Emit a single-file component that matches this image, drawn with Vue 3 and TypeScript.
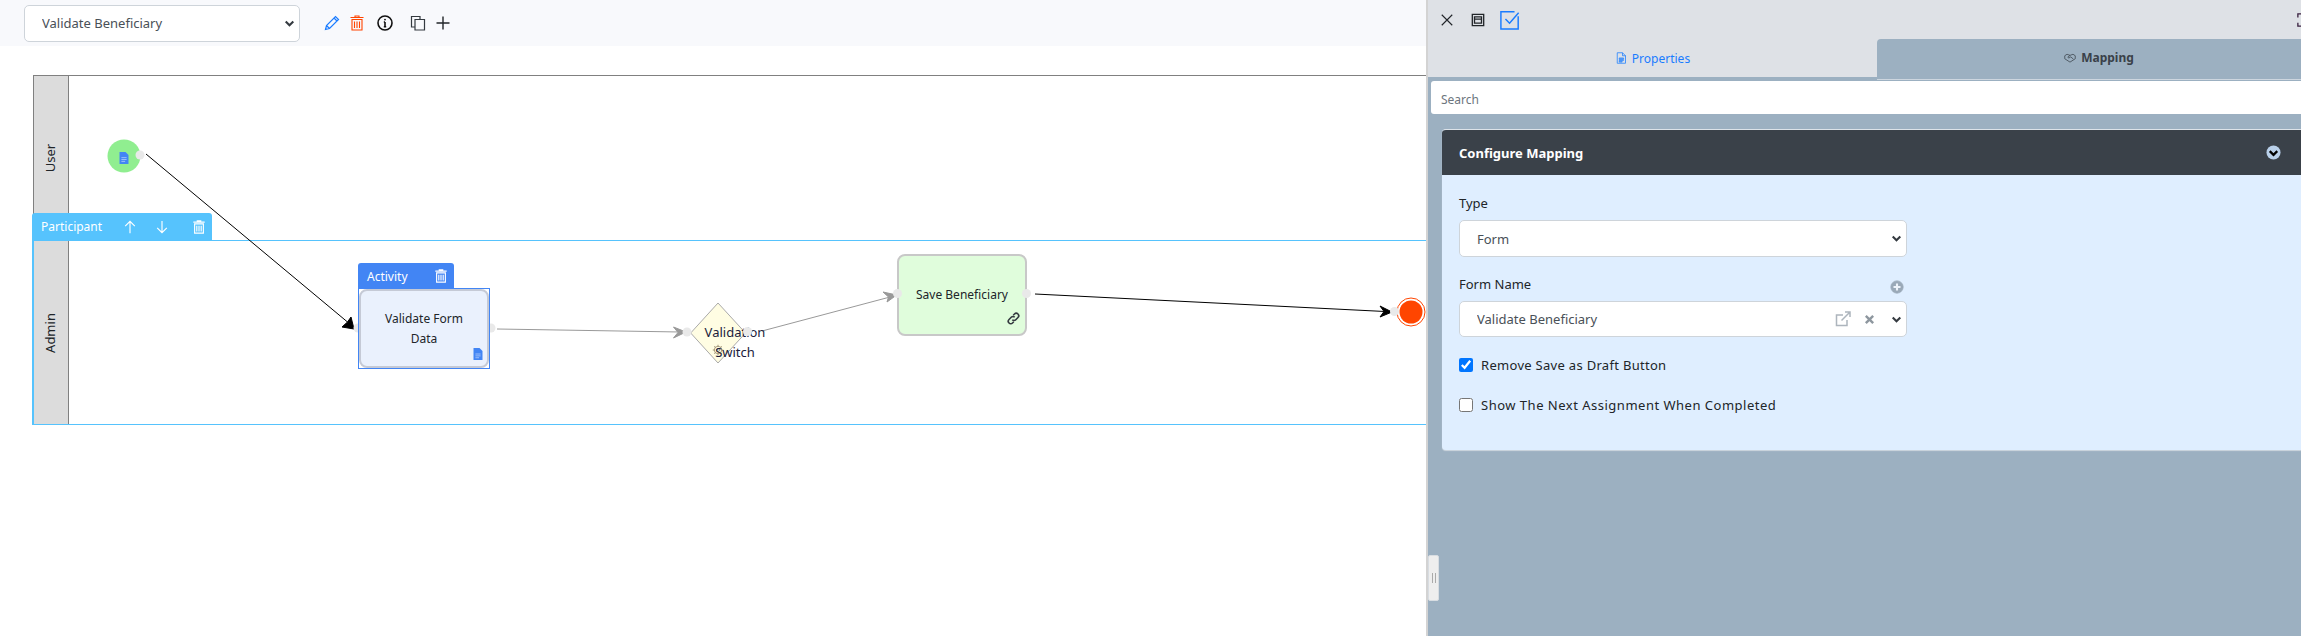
<script setup lang="ts">
import { ref } from "vue";

const processName = ref("Validate Beneficiary");
const mappingType = ref("Form");
const formName = ref("Validate Beneficiary");
const removeDraft = ref(true);
const showNext = ref(false);

const lanes = [
  { name: "User", cls: "lane-user" },
  { name: "Admin", cls: "lane-admin" },
];

// hand drawn, all on a 16 box
const doc = "M3 1h7l4 4v10H3zM10 1v4h4M5.5 8h6v1h-6zM5.5 10.2h6v1h-6zM5.5 12.4h4v1h-4z";
const trash = "M3 4.5h10V15H3zM1.5 2.5h13M6 2.5V1h4v1.5M5.5 6.5v6.5M8 6.5v6.5M10.5 6.5v6.5";
const chevron = "M2.5 5l5.5 5.5L13.5 5";
</script>

<template>
  <div class="page">
    <div class="toolbar">
      <div class="select-wrap top-select">
        <select v-model="processName">
          <option>Validate Beneficiary</option>
        </select>
        <svg class="chev" viewBox="0 0 16 16"><path :d="chevron" /></svg>
      </div>
      <div class="tools">
        <svg class="tool pencil" viewBox="0 0 16 16"><path d="M1.5 14.5l1-4L11.5 1.5l3 3L5.500 13.500zM2.500 10.500l3 3M10 3l3 3" /></svg>
        <svg class="tool bin" viewBox="0 0 16 16"><path :d="trash" /></svg>
        <svg class="tool info" viewBox="0 0 16 16"><circle cx="8" cy="8" r="7" /><path d="M8 7v4.500M6.800 11.800h2.400M6.800 7h1.200" /><circle class="dot" cx="8" cy="4.600" r="0.900" /></svg>
        <svg class="tool copy" viewBox="0 0 16 16"><path d="M5 12H1.500V1.500H10V4M5 4.500h9.500V15H5z" /></svg>
        <svg class="tool plus" viewBox="0 0 16 16"><path d="M8 1.500v13M1.500 8h13" /></svg>
      </div>
    </div>

    <div class="pool">
      <div v-for="lane in lanes" :key="lane.name" class="lane" :class="lane.cls">
        <div class="lane-head"><span>{{ lane.name }}</span></div>
      </div>
    </div>

    <!-- diagram canvas, page coordinates -->
    <div class="diagram">
      <svg class="edges" width="2301" height="636" viewBox="0 0 2301 636">
        <g class="edge dark">
          <path d="M146 154L347.500 322" />
          <path class="head" d="M354 329L342 327L347.500 322L351 317z" />
        </g>
        <g class="edge grey">
          <path d="M497 329L680 332" />
          <path class="head" d="M686 332L673.500 327L678 332.500L673.500 338z" />
          <path d="M762 331L890 297" />
          <path class="head" d="M896.700 295L883 292L888.500 297L887 302z" />
        </g>
        <g class="edge dark">
          <path d="M1035 294L1385 311.500" />
          <path class="head" d="M1392 312L1380 306L1384 311.500L1380 317z" />
        </g>
        <polygon class="gateway" points="718,303 745.500,333 718,363 690.700,333" />
        <circle class="end-ring" cx="1411" cy="312" r="14" />
        <circle class="end-fill" cx="1411" cy="312" r="11.500" />
        <circle class="start" cx="124" cy="156" r="16.500" />
        <circle class="port" cx="140" cy="155" r="4.500" />
        <circle class="port" cx="358" cy="328" r="4.500" />
        <circle class="port" cx="491" cy="328" r="4.500" />
        <circle class="port" cx="687" cy="332" r="4.500" />
      </svg>

      <svg class="start-doc" viewBox="0 0 16 16"><path class="doc-fill" d="M2 0h8l4 4v12H2z" /><path class="doc-lines" d="M4.500 7.500h7M4.500 10h7M4.500 12.500h5" /></svg>

      <div class="participant-tag">
        <span>Participant</span>
        <svg class="tag-icon up" viewBox="0 0 16 16"><path d="M8 15V1.500M2.500 7L8 1.500 13.500 7" /></svg>
        <svg class="tag-icon down" viewBox="0 0 16 16"><path d="M8 1v13.500M2.500 9L8 14.500 13.500 9" /></svg>
        <svg class="tag-icon del" viewBox="0 0 16 16"><path :d="trash" /></svg>
      </div>

      <div class="activity-tag">
        <span>Activity</span>
        <svg class="tag-icon" viewBox="0 0 16 16"><path :d="trash" /></svg>
      </div>
      <div class="activity-frame">
        <div class="node activity-node">Validate Form<br />Data</div>
        <svg class="node-doc" viewBox="0 0 16 16"><path class="doc-fill" d="M2 0h8l4 4v12H2z" /><path class="doc-lines" d="M4.500 8h7M4.500 10.500h7M4.500 13h5" /></svg>
      </div>

      <svg class="gear" viewBox="0 0 16 16"><circle cx="8" cy="8" r="5" /><circle cx="8" cy="8" r="2" /><path d="M8 1v2M8 13v2M1 8h2M13 8h2M3 3l1.500 1.500M11.500 11.500L13 13M13 3l-1.500 1.500M4.500 11.500L3 13" /></svg>
      <div class="gateway-label">Validation<br />Switch</div>
      <i class="gate-port"></i>

      <div class="node save-node">
        Save Beneficiary
        <svg class="link" viewBox="0 0 16 16"><path d="M6.500 9.500a3 3 0 0 0 4.300 0l2.700-2.700a3 3 0 0 0-4.300-4.300L7.700 4M9.500 6.500a3 3 0 0 0-4.300 0L2.500 9.200a3 3 0 0 0 4.300 4.300L8.300 12" /></svg>
        <i class="save-port in"></i>
        <i class="save-port out"></i>
      </div>
      <i class="end-port"></i>
    </div>

    <!-- side panel sits over the canvas -->
    <aside class="panel">
      <div class="panel-top">
        <svg class="p-icon close" viewBox="0 0 16 16"><path d="M2 2l12 12M14 2L2 14" /></svg>
        <svg class="p-icon window" viewBox="0 0 16 16"><path d="M1.500 1.500h13v13h-13zM4 4.500h8v7H4zM4 7h8" /></svg>
        <svg class="p-icon check" viewBox="0 0 22 22"><path d="M20 7v14H1V2h15M6 10l4.500 4.500L20.500 3" /></svg>
        <svg class="p-icon full" viewBox="0 0 16 16"><path d="M5 1H1v4M11 1h4v4M5 15H1v-4M11 15h4v-4" /></svg>
      </div>

      <div class="tabs">
        <div class="tab tab-props">
          <svg class="tab-icon" viewBox="0 0 16 16"><path :d="doc" /></svg>
          Properties
        </div>
        <div class="tab tab-map">
          <svg class="tab-icon" viewBox="0 0 16 12"><path d="M1 3l3-2 4 1.500L12 1l3 2v4l-7 4.500L1 7zM8 2.500L5 5l1.500 1L9 4.500l3.500 3" /></svg>
          Mapping
        </div>
      </div>

      <input class="search" type="text" placeholder="Search" />

      <section class="card">
        <header class="card-head">
          <span>Configure Mapping</span>
          <svg class="collapse" viewBox="0 0 16 16"><circle cx="8" cy="8" r="7.500" /><path d="M4 6.500l4 4 4-4" /></svg>
        </header>
        <div class="card-body">
          <div class="field">
            <label>Type</label>
            <div class="select-wrap">
              <select v-model="mappingType">
                <option>Form</option>
              </select>
              <svg class="chev" viewBox="0 0 16 16"><path :d="chevron" /></svg>
            </div>
          </div>

          <div class="field field-name">
            <label>Form Name</label>
            <svg class="add" viewBox="0 0 16 16"><circle cx="8" cy="8" r="7" /><path d="M8 4v8M4 8h8" /></svg>
            <div class="select-wrap">
              <select v-model="formName">
                <option>Validate Beneficiary</option>
              </select>
              <svg class="open-link" viewBox="0 0 16 16"><path d="M12 9v5.500H1.500V4H8M6.500 9.500L14.500 1.500M10 1h5v5" /></svg>
              <svg class="clear" viewBox="0 0 12 12"><path d="M2 2l8 8M10 2l-8 8" /></svg>
              <svg class="chev" viewBox="0 0 16 16"><path :d="chevron" /></svg>
            </div>
          </div>

          <label class="check-row first">
            <input v-model="removeDraft" type="checkbox" />
            <span>Remove Save as Draft Button</span>
          </label>
          <label class="check-row second">
            <input v-model="showNext" type="checkbox" />
            <span>Show The Next Assignment When Completed</span>
          </label>
        </div>
      </section>

      <div class="handle"><i></i><i></i></div>
    </aside>
  </div>
</template>

<style>
html,
body {
  margin: 0;
  background: #fff;
}
</style>

<style scoped>
.page {
  position: relative;
  width: 2301px;
  height: 636px;
  overflow: hidden;
  background: #fff;
  color: #212529;
  font-family: "Noto Sans", "Open Sans", sans-serif;
  font-size: 13px;
}

svg {
  display: block;
  fill: none;
  stroke: currentColor;
}

/* toolbar */
.toolbar {
  display: flex;
  align-items: center;
  height: 46px;
  padding-left: 24px;
  background: #f8f9fc;
}

.select-wrap {
  position: relative;
}

.select-wrap select {
  display: block;
  width: 100%;
  height: 37px;
  padding: 0 17px;
  border: 1px solid #ced4da;
  border-radius: 5px;
  background: #fff;
  color: #495057;
  font: inherit;
  appearance: none;
}

.top-select {
  width: 276px;
}

.chev {
  position: absolute;
  right: 5px;
  top: 13px;
  width: 11px;
  height: 11px;
  color: #343a40;
  stroke-width: 3;
}

.tools {
  display: flex;
  align-items: center;
  margin-left: 24px;
}

.tool {
  width: 16px;
  height: 16px;
  stroke-width: 1.2;
}

.pencil {
  color: #1a7cff;
}

.bin {
  margin-left: 9px;
  color: #ff4500;
  stroke-width: 1.1;
}

.info {
  margin-left: 12px;
  color: #111;
  stroke-width: 1.6;
}

.dot {
  fill: #111;
  stroke: none;
}

.copy {
  margin-left: 17px;
  color: #343a40;
}

.plus {
  margin-left: 9px;
  color: #212529;
  stroke-width: 1.4;
}

/* swimlanes */
.pool {
  margin: 29px 0 0 33px;
  width: 1400px;
}

.lane {
  display: flex;
  box-sizing: border-box;
}

.lane-user {
  height: 165px;
  border-top: 1px solid #808080;
  border-left: 1px solid #808080;
}

.lane-admin {
  height: 185px;
  margin-left: -1px;
  border-top: 1px solid #56c3fd;
  border-left: 2px solid #56c3fd;
  border-bottom: 1px solid #56c3fd;
}

.lane-head {
  display: flex;
  align-items: center;
  justify-content: center;
  width: 34px;
  background: #dcdcdc;
  border-right: 1px solid #808080;
  font-size: 13px;
}

.lane-head span {
  transform: rotate(-90deg);
  margin-right: 2px;
}

/* diagram */
.diagram {
  position: absolute;
  inset: 0;
}

.edges {
  position: absolute;
  left: 0;
  top: 0;
}

.edge path {
  stroke-width: 1;
}

.edge.dark {
  color: #000;
}

.edge.grey {
  color: #999;
}

.edge .head {
  fill: currentColor;
}

.gateway {
  fill: #fffde3;
  stroke: #aaa;
}

.start {
  fill: #90ee90;
  stroke: none;
}

.port {
  fill: #e9e9e9;
  stroke: none;
}

.end-ring {
  fill: #fff;
  stroke: #ff4500;
}

.end-fill {
  fill: #ff4500;
  stroke: none;
}

.doc-fill {
  fill: #4285f4;
  stroke: none;
}

.doc-lines {
  stroke: #b9d0fb;
  stroke-width: 1;
}

.start-doc {
  position: absolute;
  left: 118px;
  top: 151px;
  width: 12px;
  height: 14px;
}

.participant-tag,
.activity-tag {
  position: absolute;
  display: flex;
  align-items: center;
  box-sizing: border-box;
  color: #fff;
  font-size: 12px;
}

.participant-tag {
  left: 32px;
  top: 213px;
  width: 180px;
  height: 27px;
  padding-left: 9px;
  background: #56c3fd;
  border-radius: 3px 3px 0 0;
}

.tag-icon {
  width: 14px;
  height: 14px;
  stroke-width: 1.300;
}

.up {
  margin-left: 21px;
}

.down {
  margin-left: 18px;
}

.del {
  margin-left: 23px;
}

.activity-tag {
  left: 358px;
  top: 263px;
  width: 96px;
  height: 26px;
  padding: 0 6px 0 9px;
  justify-content: space-between;
  background: #4285f4;
  border-radius: 3px 3px 0 0;
}

.activity-frame {
  position: absolute;
  left: 358px;
  top: 288px;
  width: 132px;
  height: 81px;
  box-sizing: border-box;
  border: 1px solid #4285f4;
  display: flex;
}

.node {
  display: flex;
  align-items: center;
  justify-content: center;
  box-sizing: border-box;
  text-align: center;
  line-height: 20px;
  font-size: 12px;
}

.activity-node {
  flex: 1;
  border: 2px solid #c5cad6;
  border-radius: 8px;
  background: #eaf1fd;
}

.node-doc {
  position: absolute;
  right: 5px;
  bottom: 7px;
  width: 12px;
  height: 14px;
}

.gateway-label {
  position: absolute;
  left: 685px;
  top: 322px;
  width: 100px;
  text-align: center;
  line-height: 20px;
  font-size: 13px;
  color: #1c1c3c;
}

.gear {
  position: absolute;
  left: 712px;
  top: 344px;
  width: 12px;
  height: 12px;
  color: #8a7a5a;
}

.gate-port {
  position: absolute;
  left: 743px;
  top: 327px;
  width: 9px;
  height: 9px;
  border-radius: 50%;
  background: #e9e9e9;
}

.save-node {
  position: absolute;
  left: 897px;
  top: 254px;
  width: 130px;
  height: 82px;
  border: 2px solid #c8c8c8;
  border-radius: 8px;
  background: #e0fddc;
}

.link {
  position: absolute;
  right: 5px;
  bottom: 9px;
  width: 13px;
  height: 13px;
  color: #343a40;
  stroke-width: 2;
}

.save-port,
.end-port {
  position: absolute;
  width: 9px;
  height: 9px;
  border-radius: 50%;
  background: #e9e9e9;
}

.save-port {
  top: 33px;
}

.save-port.in {
  left: -6px;
}

.save-port.out {
  right: -6px;
}

.end-port {
  left: 1390px;
  top: 307px;
}

/* panel */
.panel {
  position: absolute;
  top: 0;
  right: 0;
  bottom: 0;
  display: flex;
  flex-direction: column;
  width: 875px;
  border-left: 2px solid #d3d3d3;
  box-sizing: border-box;
  background: #9cb0c1;
}

.panel-top {
  display: flex;
  align-items: center;
  height: 39px;
  padding-left: 12px;
  background: #dee1e6;
}

.p-icon {
  width: 14px;
  height: 14px;
}

.close {
  color: #212529;
  stroke-width: 1.300;
}

.window {
  margin-left: 17px;
  color: #212529;
  stroke-width: 1.500;
}

.check {
  margin-left: 15px;
  width: 20px;
  height: 20px;
  color: #1a7cff;
  stroke-width: 1.600;
}

.full {
  margin-left: auto;
  margin-right: -10px;
  color: #3a2040;
  stroke-width: 1.500;
}

.tabs {
  display: flex;
  height: 41px;
  background: #dee1e6;
  font-size: 12px;
}

.tab {
  display: flex;
  align-items: center;
  justify-content: center;
  gap: 5px;
  box-sizing: border-box;
  padding-bottom: 3px;
}

.tab-icon {
  width: 12px;
  height: 12px;
}

.tab-props {
  flex: 0 0 449px;
  color: #1a7cff;
  box-shadow: inset 0 -3px 0 #9cb0c1;
}

.tab-map {
  flex: 1;
  padding-left: 20px;
  background: #9cb0c1;
  border-radius: 4px 0 0 0;
  border-bottom: 1px solid #cdd6df;
  color: #3a4149;
  font-weight: 700;
}

.search {
  display: block;
  box-sizing: border-box;
  width: calc(100% - 3px);
  height: 33px;
  margin: 1px 0 0 3px;
  padding: 3px 10px 0;
  border: 0;
  border-radius: 3px 0 0 3px;
  background: #fff;
  font: inherit;
  font-size: 12px;
  outline: none;
}

.search::placeholder {
  color: #6c757d;
}

.card {
  margin: 15px 0 0 14px;
  border-top: 1px solid #dde3e9;
  border-radius: 4px 0 0 4px;
  overflow: hidden;
  background: #dfeeff;
  box-shadow: 0 1px 1px #cfd7df;
}

.card-head {
  display: flex;
  align-items: center;
  justify-content: space-between;
  height: 45px;
  padding: 0 20px 0 17px;
  background: #3a4149;
  color: #fff;
  font-weight: 700;
}

.collapse {
  width: 15px;
  height: 15px;
}

.collapse circle {
  fill: #b9d0ea;
  stroke: none;
}

.collapse path {
  color: #000;
  stroke-width: 2.400;
}

.card-body {
  height: 275px;
  box-sizing: border-box;
  padding: 18px 0 0 17px;
}

.field {
  position: relative;
  width: 448px;
}

.field label {
  display: block;
  margin-bottom: 7px;
  line-height: 20px;
}

.field-name {
  margin-top: 17px;
}

.field-name select {
  height: 36px;
}

.add {
  position: absolute;
  right: 3px;
  top: 6px;
  width: 14px;
  height: 14px;
  color: #9aa9b8;
}

.add circle {
  fill: currentColor;
}

.add path {
  color: #eef4fb;
  stroke-width: 2.400;
}

.open-link {
  position: absolute;
  right: 56px;
  top: 10px;
  width: 16px;
  height: 16px;
  color: #adb5bd;
  stroke-width: 1.500;
}

.clear {
  position: absolute;
  right: 32px;
  top: 13px;
  width: 11px;
  height: 11px;
  color: #8e979f;
  stroke-width: 2.600;
}

.check-row {
  display: flex;
  align-items: center;
  gap: 8px;
  height: 20px;
  margin-top: 20px;
}

.check-row.first {
  margin-top: 18px;
  letter-spacing: 0.3px;
}

.check-row.second {
  letter-spacing: 0.5px;
}

.check-row input {
  width: 14px;
  height: 14px;
  margin: 0;
  accent-color: #0075ff;
}

.handle {
  position: absolute;
  left: 0;
  top: 555px;
  display: flex;
  align-items: center;
  justify-content: center;
  gap: 2px;
  width: 11px;
  height: 46px;
  box-sizing: border-box;
  background: #eee;
  border: 1px solid #d8dde2;
  border-radius: 2px;
}

.handle i {
  display: block;
  width: 1px;
  height: 10px;
  background: #aaa;
}
</style>
